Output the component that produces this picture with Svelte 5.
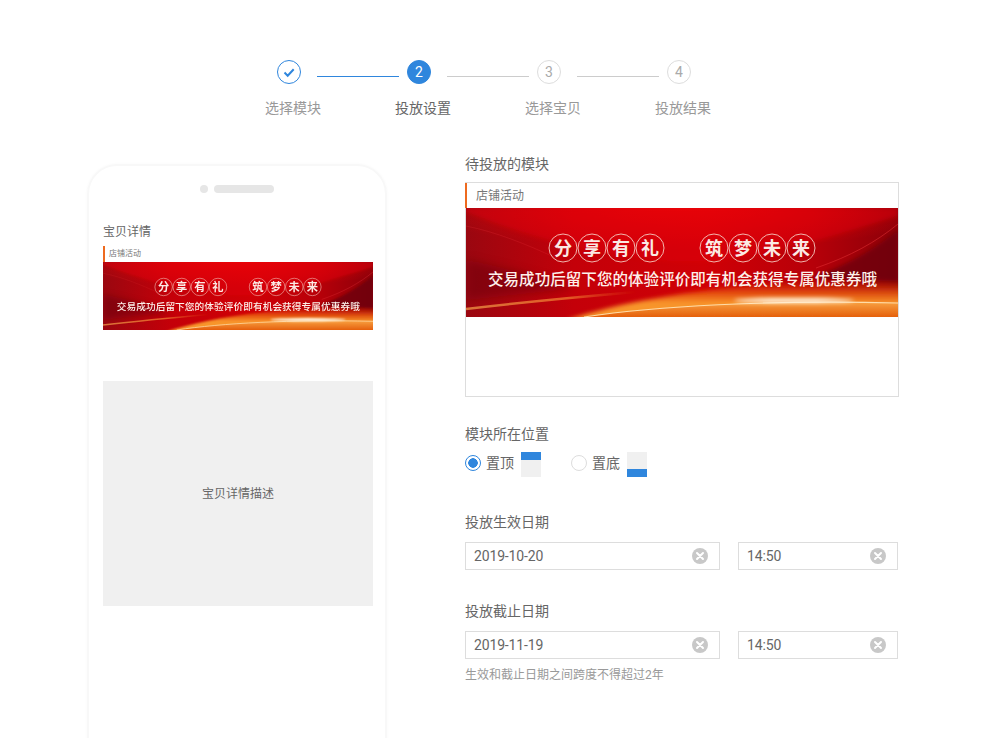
<script lang="ts">
    const steps = [
        { label: "选择模块", state: "done" },
        { label: "投放设置", state: "active" },
        { label: "选择宝贝", state: "todo" },
        { label: "投放结果", state: "todo" },
    ];
    const periods = [
        { label: "投放生效日期", date: "2019-10-20", time: "14:50" },
        { label: "投放截止日期", date: "2019-11-19", time: "14:50" },
    ];
    const seals = [
        { x: 97, c: "分" },
        { x: 126, c: "享" },
        { x: 155, c: "有" },
        { x: 184, c: "礼" },
        { x: 248, c: "筑" },
        { x: 277, c: "梦" },
        { x: 306, c: "未" },
        { x: 335, c: "来" },
    ];
</script>

{#snippet banner(cls: string)}
    <svg class={cls} viewBox="0 0 432 109" preserveAspectRatio="none">
        <defs>
            <linearGradient id="base" x1="0" y1="0" x2="1" y2="0">
                <stop offset="0" stop-color="#9a0710" />
                <stop offset="0.25" stop-color="#c40009" />
                <stop offset="0.55" stop-color="#d00006" />
                <stop offset="0.8" stop-color="#b70009" />
                <stop offset="1" stop-color="#8c0009" />
            </linearGradient>
            <linearGradient id="glow" gradientUnits="userSpaceOnUse" x1="0" y1="72" x2="0" y2="95">
                <stop offset="0" stop-color="#d8300a" stop-opacity="0" />
                <stop offset="0.55" stop-color="#e8560e" stop-opacity=".85" />
                <stop offset="1" stop-color="#f8952c" />
            </linearGradient>
            <linearGradient id="streak" gradientUnits="userSpaceOnUse" x1="0" y1="0" x2="170" y2="0">
                <stop offset="0" stop-color="#f09a48" />
                <stop offset="0.6" stop-color="#ee7a30" />
                <stop offset="1" stop-color="#e8501c" stop-opacity="0" />
            </linearGradient>
            <linearGradient id="under" x1="0" y1="0" x2="0" y2="1">
                <stop offset="0" stop-color="#f8a040" />
                <stop offset="1" stop-color="#e5600c" />
            </linearGradient>
            <radialGradient id="top" cx="0.5" cy="0" r="0.6">
                <stop offset="0" stop-color="#ec0505" />
                <stop offset="1" stop-color="#ec0505" stop-opacity="0" />
            </radialGradient>
            <filter id="soft" x="-10%" y="-100%" width="120%" height="300%">
                <feGaussianBlur stdDeviation="2" />
            </filter>
            <filter id="thin" x="-10%" y="-200%" width="120%" height="500%">
                <feGaussianBlur stdDeviation=".7" />
            </filter>
            <filter id="wide" x="-20%" y="-80%" width="140%" height="260%">
                <feGaussianBlur stdDeviation="5" />
            </filter>
        </defs>
        <rect width="432" height="109" fill="url(#base)" />
        <rect width="432" height="70" fill="url(#top)" />
        <path d="M0 4C60 28 120 44 190 52S330 40 432 8V0H0Z" fill="#e00407" opacity=".45" filter="url(#soft)" />
        <path d="M0 52L0 92L110 80C70 68 30 58 0 52Z" fill="#6f0410" opacity=".55" filter="url(#wide)" />
        <path d="M432 22C410 40 380 58 345 70L432 74Z" fill="#6a0008" opacity=".75" filter="url(#soft)" />
        <path d="M432 16C410 34 385 48 350 60" fill="none" stroke="#e8353a" stroke-width=".7" opacity=".7" />
        <path d="M0 18C30 24 60 36 90 50" fill="none" stroke="#e8353a" stroke-width=".6" opacity=".4" />
        <path d="M100 112C180 86 300 70 440 72V112Z" fill="url(#glow)" filter="url(#soft)" />
        <path d="M0 101C50 95 100 90 170 84" fill="none" stroke="url(#streak)" stroke-width="2.4" opacity=".75" filter="url(#thin)" />
        <path d="M118 109C190 98 300 92 432 95V109Z" fill="url(#under)" filter="url(#thin)" />
        <path d="M118 109C190 98 300 92 432 95" fill="none" stroke="#ffdca8" stroke-width="1.2" filter="url(#thin)" />
        <ellipse cx="328" cy="92.5" rx="60" ry="2.6" fill="#fff6e4" filter="url(#soft)" />
        <g class="ink">
            {#each seals as s}
                <circle cx={s.x} cy="40" r="14" fill="none" stroke="#f6c9c0" stroke-width=".9" />
                <text class="seal" x={s.x} y="46.5" text-anchor="middle">{s.c}</text>
            {/each}
            <text class="slogan" x="216.5" y="76.5" text-anchor="middle" textLength="389">交易成功后留下您的体验评价即有机会获得专属优惠券哦</text>
        </g>
    </svg>
{/snippet}

{#snippet clear()}
    <svg class="clear" viewBox="0 0 16 16">
        <circle cx="8" cy="8" r="8" fill="#c8c8c8" />
        <path d="M5 5l6 6M11 5l-6 6" stroke="#fff" stroke-width="2" stroke-linecap="round" />
    </svg>
{/snippet}

<div class="page">
    <ul class="steps">
        {#each steps as step, i}
            <li class="step {step.state}">
                <div class="head">
                    <span class="dot">
                        {#if step.state === "done"}
                            <svg viewBox="0 0 24 24" class="tick">
                                <path d="M7.5 12.5l3.2 3.2 6-6.4" fill="none" stroke="#2f86dd" stroke-width="2" />
                            </svg>
                        {:else}
                            {i + 1}
                        {/if}
                    </span>
                    {#if i < steps.length - 1}
                        <span class="line"></span>
                    {/if}
                </div>
                <p>{step.label}</p>
            </li>
        {/each}
    </ul>

    <div class="main">
        <section class="phone">
            <div class="speaker"><i></i><b></b></div>
            <h3>宝贝详情</h3>
            <div class="mini-head">店铺活动</div>
            {@render banner("mini-banner")}
            <div class="desc">宝贝详情描述</div>
        </section>

        <section class="form">
            <div class="label first">待投放的模块</div>
            <div class="preview">
                <div class="preview-head">店铺活动</div>
                {@render banner("big-banner")}
            </div>

            <div class="label pos">模块所在位置</div>
            <div class="radios">
                <span class="radio checked"></span>
                <span class="radio-text">置顶</span>
                <span class="picto"><i></i></span>
                <span class="radio second"></span>
                <span class="radio-text">置底</span>
                <span class="picto bottom"><i></i></span>
            </div>

            {#each periods as p, i}
                <div class="label period" class:near={i === 1}>{p.label}</div>
                <div class="inputs">
                    <div class="input date">{p.date}{@render clear()}</div>
                    <div class="input time">{p.time}{@render clear()}</div>
                </div>
            {/each}
            <p class="hint">生效和截止日期之间跨度不得超过2年</p>
        </section>
    </div>
</div>

<style>
    :global(body) {
        margin: 0;
        background: #fff;
        overflow: hidden;
    }

    .page {
        width: 1004px;
        height: 738px;
        overflow: hidden;
        font-family: Roboto, "Noto Sans CJK SC", sans-serif;
        color: #666;
    }

    .steps {
        display: flex;
        list-style: none;
        margin: 0;
        padding: 60px 0 0 265px;
    }

    .step {
        width: 130px;
    }

    .head {
        display: flex;
        padding-left: 12px;
        height: 24px;
    }

    .dot {
        flex: none;
        box-sizing: border-box;
        width: 24px;
        height: 24px;
        border-radius: 50%;
        border: 1px solid #ddd;
        display: flex;
        align-items: center;
        justify-content: center;
        font-size: 14px;
        color: #aaa;
    }

    .done .dot {
        border-color: #2f86dd;
    }

    .active .dot {
        border-color: #2f86dd;
        background: #2f86dd;
        color: #fff;
    }

    .tick {
        width: 24px;
        height: 24px;
        flex: none;
    }

    .line {
        flex: none;
        width: 82px;
        height: 1px;
        margin: 16px 0 0 16px;
        background: #ccc;
    }

    .done .line {
        background: #2f86dd;
    }

    .step p {
        margin: 14px 0 0;
        font-size: 14px;
        line-height: 20px;
        color: #999;
    }

    .step.active p {
        color: #666;
    }

    .main {
        display: flex;
        padding: 46px 0 0 87px;
    }

    .phone {
        flex: none;
        box-sizing: border-box;
        width: 300px;
        height: 640px;
        padding: 0 12px 0 14px;
        border: 2px solid #f8f8f8;
        border-radius: 30px;
        box-shadow: 0 0 3px rgba(0, 0, 0, 0.03);
    }

    .speaker {
        display: flex;
        align-items: center;
        justify-content: center;
        gap: 6px;
        margin: 19px 0 0 -2px;
    }

    .speaker i {
        width: 8px;
        height: 8px;
        border-radius: 50%;
        background: #e6e6e6;
    }

    .speaker b {
        width: 60px;
        height: 8px;
        border-radius: 4px;
        background: #e6e6e6;
    }

    h3 {
        margin: 29px 0 0;
        font-size: 12px;
        line-height: 20px;
        font-weight: 400;
        color: #666;
    }

    .mini-head {
        box-sizing: border-box;
        height: 16px;
        margin-top: 4px;
        padding-left: 4px;
        border-left: 2px solid #ee6a1f;
        font-size: 8px;
        line-height: 16px;
        color: #777;
    }

    .mini-banner {
        display: block;
        width: 270px;
        height: 68px;
    }

    .mini-banner .ink {
        filter: blur(0.3px);
    }

    .desc {
        box-sizing: border-box;
        height: 225px;
        margin-top: 51px;
        padding-bottom: 2px;
        display: flex;
        align-items: center;
        justify-content: center;
        background: #f0f0f0;
        font-size: 12px;
        color: #666;
    }

    .form {
        flex: none;
        width: 434px;
        margin-left: 78px;
    }

    .label {
        font-size: 14px;
        line-height: 20px;
        color: #666;
    }

    .first {
        margin-top: -10px;
    }

    .preview {
        box-sizing: border-box;
        height: 215px;
        margin-top: 8px;
        border: 1px solid #ddd;
    }

    .preview-head {
        box-sizing: border-box;
        height: 25px;
        padding-left: 9px;
        border-left: 2px solid #ee6a1f;
        margin-left: -1px;
        font-size: 12px;
        line-height: 26px;
        color: #777;
    }

    .big-banner {
        display: block;
        width: 432px;
        height: 109px;
    }

    .pos {
        margin-top: 27px;
    }

    .radios {
        display: flex;
        align-items: flex-start;
        height: 25px;
        margin-top: 8px;
    }

    .radio {
        box-sizing: border-box;
        width: 16px;
        height: 16px;
        margin-top: 3px;
        border-radius: 50%;
        border: 1px solid #ddd;
        background: #fff;
    }

    .radio.checked {
        border-color: #2f86dd;
        background: radial-gradient(circle, #2f86dd 0 4.5px, #fff 5px);
    }

    .radio.second {
        margin-left: 30px;
    }

    .radio-text {
        margin: 0 7px 0 5px;
        font-size: 14px;
        line-height: 22px;
        color: #666;
    }

    .picto {
        width: 20px;
        height: 25px;
        display: flex;
        background: #f0f0f0;
    }

    .picto i {
        width: 100%;
        height: 8px;
        background: #2f86dd;
    }

    .picto.bottom {
        align-items: flex-end;
    }

    .period {
        margin-top: 35px;
    }

    .period.near {
        margin-top: 31px;
    }

    .inputs {
        display: flex;
        gap: 18px;
        margin-top: 10px;
    }

    .input {
        box-sizing: border-box;
        height: 28px;
        padding: 0 11px 0 8px;
        display: flex;
        align-items: center;
        justify-content: space-between;
        border: 1px solid #ddd;
        font-size: 14px;
        letter-spacing: -0.15px;
        color: #666;
    }

    .date {
        width: 255px;
    }

    .time {
        width: 160px;
    }

    .clear {
        width: 16px;
        height: 16px;
        flex: none;
    }

    .hint {
        margin: 7px 0 0;
        font-size: 12px;
        line-height: 18px;
        color: #999;
    }

    .seal {
        font-size: 18px;
        font-weight: 700;
        fill: #fbe9e4;
    }

    .slogan {
        font-size: 15.5px;
        font-weight: 500;
        fill: #fdf0ea;
    }
</style>
